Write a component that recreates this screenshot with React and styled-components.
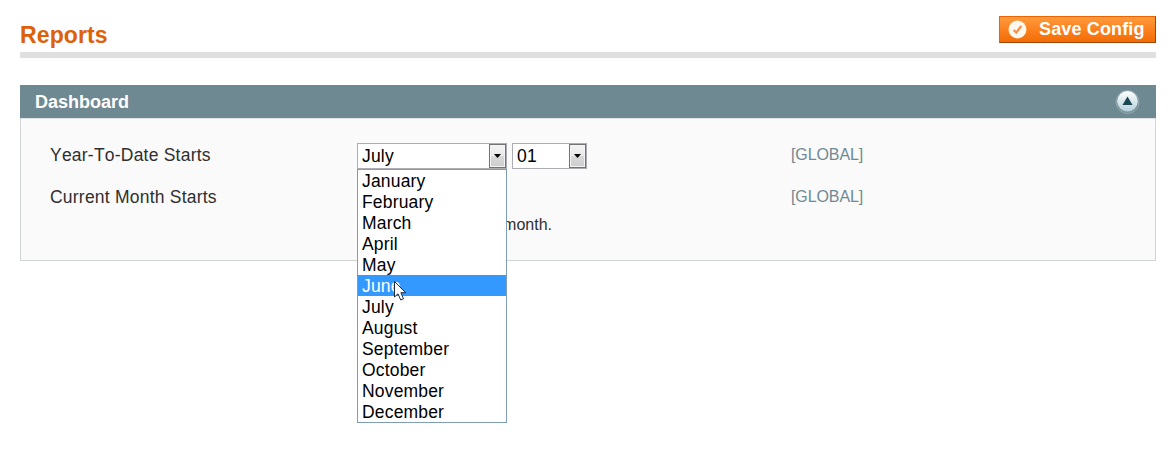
import React from "react";
import styled, { createGlobalStyle } from "styled-components";

const GlobalStyle = createGlobalStyle`
  * { box-sizing: border-box; }
  body {
    margin: 0;
    background: #fff;
    font-family: "Liberation Sans", Arial, sans-serif;
    font-kerning: none;
    color: #2f2f2f;
  }
`;

const Page = styled.main`
  width: 1172px;
  height: 451px;
  padding: 0 16px 0 20px;
  overflow: hidden;
`;

const PageHeader = styled.header`
  display: flex;
  justify-content: space-between;
  height: 58px;
  padding-top: 16px;
  border-bottom: 6px solid #dfdfdf;
`;

const Title = styled.h1`
  margin: 4px 0 0;
  font-size: 23px;
  line-height: 30px;
  letter-spacing: 0.12px;
  color: #dd6108;
`;

const SaveButton = styled.button`
  display: flex;
  align-items: center;
  width: 157px;
  height: 27px;
  padding: 0 0 1px 8px;
  gap: 12px;
  border: 1px solid;
  border-color: #ed6502 #a04300 #a04300 #ed6502;
  background: linear-gradient(#ff9a3c, #fb8120 50%, #f36c05);
  color: #fff;
  font: bold 18px/24px "Liberation Sans", Arial, sans-serif;
  letter-spacing: 0.15px;
  white-space: nowrap;
  svg { flex: none; }
`;

const Panel = styled.section`
  margin-top: 27px;
`;

const PanelHeader = styled.div`
  display: flex;
  align-items: center;
  justify-content: space-between;
  height: 33px;
  padding: 0 15px;
  background: #6f8992;
`;

const PanelTitle = styled.h2`
  margin: 0;
  font-size: 18px;
  line-height: 24px;
  letter-spacing: 0;
  color: #fff;
`;

const PanelBody = styled.div`
  height: 143px;
  padding: 24px 0 0 29px;
  border: 1px solid #d2d5d6;
  border-top-color: #dfe3e4;
  background: #fafafa;
`;

const Row = styled.div`
  display: grid;
  grid-template-columns: 307px 434px auto;
  height: 42px;
`;

const Label = styled.span`
  font-size: 17.5px;
  line-height: 24px;
  letter-spacing: 0.22px;
  white-space: nowrap;
`;

const Scope = styled.span`
  font-size: 16px;
  line-height: 23px;
  letter-spacing: -0.1px;
  color: #6f8992;
`;

const Fields = styled.div`
  display: flex;
  gap: 5px;
`;

const SelectWrap = styled.div`
  position: relative;
`;

const SelectBox = styled.div`
  display: flex;
  justify-content: space-between;
  width: ${(p) => p.$width}px;
  height: 26px;
  padding-left: 4px;
  border: 1px solid #abadb3;
  background: #fff;
  color: #000;
  font-size: 17.5px;
  line-height: 25px;
  letter-spacing: 0.17px;
`;

const SelectArrow = styled.span`
  display: flex;
  align-items: center;
  justify-content: center;
  width: 17px;
  height: 24px;
  border: 1px solid #737373;
  background: linear-gradient(#f4f4f4, #e8e8e8 49%, #d9d9d9 51%, #cecece);
  box-shadow: inset 0 0 0 1px #f3f3f3;
`;

const Options = styled.ul`
  position: absolute;
  top: 26px;
  left: 0;
  z-index: 1;
  width: 150px;
  margin: 0;
  padding: 0;
  border: 1px solid #7f9db9;
  background: #fff;
  list-style: none;
`;

const Option = styled.li`
  height: 21px;
  padding-left: 4px;
  font-size: 17.5px;
  line-height: 23px;
  letter-spacing: 0.17px;
  color: ${(p) => (p.$active ? "#fff" : "#000")};
  background: ${(p) => (p.$active ? "#3399ff" : "transparent")};
`;

const Pointer = styled.svg`
  position: absolute;
  top: 137px;
  left: 36px;
  z-index: 2;
`;

const Note = styled.p`
  width: 195px;
  margin: 30px 0 0;
  font-size: 16px;
  line-height: 20px;
  text-align: right;
`;

const months = [
  "January", "February", "March", "April", "May", "June",
  "July", "August", "September", "October", "November", "December",
];

const CheckIcon = () => (
  <svg width="19" height="19" viewBox="0 0 19 19">
    <circle cx="9.5" cy="9.5" r="9" fill="#fff8ee" />
    <path d="M5.6 10 8.2 12.6 13.3 6" fill="none" stroke="#f39048" strokeWidth="2.2" />
  </svg>
);

const CollapseIcon = () => (
  <svg width="26" height="26" viewBox="0 0 26 26">
    <defs>
      <linearGradient id="knob" x1="0" y1="0" x2="0" y2="1">
        <stop offset="0" stopColor="#ffffff" />
        <stop offset="1" stopColor="#b4d1d9" />
      </linearGradient>
    </defs>
    <circle cx="12.5" cy="13" r="11.5" fill="#78929a" stroke="#91a8af" />
    <circle cx="12.5" cy="12.3" r="10.3" fill="url(#knob)" />
    <path d="M12.5 7.5 17.5 16H7.5Z" fill="#1b4653" />
  </svg>
);

const Select = ({ width, value, children }) => (
  <SelectWrap>
    <SelectBox $width={width}>
      {value}
      <SelectArrow>
        <svg width="7" height="4" viewBox="0 0 7 4">
          <path d="M0 0H7L3.5 4Z" fill="#000" />
        </svg>
      </SelectArrow>
    </SelectBox>
    {children}
  </SelectWrap>
);

export default function App() {
  return (
    <Page>
      <GlobalStyle />
      <PageHeader>
        <Title>Reports</Title>
        <SaveButton><CheckIcon />Save Config</SaveButton>
      </PageHeader>
      <Panel>
        <PanelHeader>
          <PanelTitle>Dashboard</PanelTitle>
          <CollapseIcon />
        </PanelHeader>
        <PanelBody>
          <Row>
            <Label>Year-To-Date Starts</Label>
            <Fields>
              <Select width={150} value="July">
                <Options>
                  {months.map((m) => (
                    <Option key={m} $active={m === "June"}>{m}</Option>
                  ))}
                </Options>
                <Pointer width="14" height="22" viewBox="0 0 14 22">
                  <path d="M1.5 1.5V17L5 13.8 7.7 20 10.5 18.8 7.9 12.7H12.7Z" fill="#fff" stroke="#1d2940" strokeWidth="1" />
                </Pointer>
              </Select>
              <Select width={75} value="01" />
            </Fields>
            <Scope>[GLOBAL]</Scope>
          </Row>
          <Row>
            <Label>Current Month Starts</Label>
            <Note>month.</Note>
            <Scope>[GLOBAL]</Scope>
          </Row>
        </PanelBody>
      </Panel>
    </Page>
  );
}
